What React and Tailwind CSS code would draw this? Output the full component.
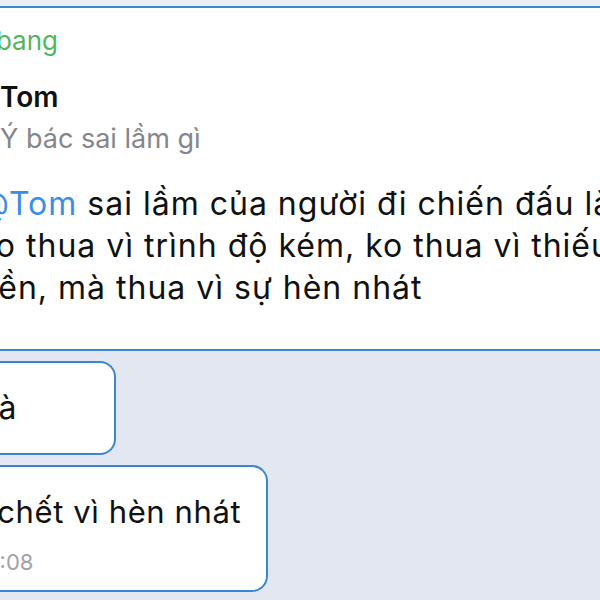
export default function App() {
  return (
    <div className="w-[600px] h-[600px] overflow-hidden bg-[#e2e7f1] font-['Inter','Noto_Sans',sans-serif] text-[#111111]">
      <div className="h-[6px] bg-[#ebeef5]" />

      {/* quoted message bubble */}
      <div className="-mx-[40px] h-[345px] border-y-2 border-[#3a86d2] bg-white pl-[18px] pt-[17px]">
        <div className="text-[26px] leading-[32px] text-[#55b55a] whitespace-nowrap">Abang</div>

        <div className="mt-[22px] border-l-2 border-[#3a86d2] pl-[20px]">
          <div className="text-[28px] leading-[36px] font-semibold whitespace-nowrap">Tom</div>
          <div className="mt-[6px] text-[27px] leading-[36px] text-[#84868c] whitespace-nowrap">Ý bác sai lầm gì</div>
        </div>

        <div className="mt-[26px] text-[32px] leading-[42px] tracking-[1px] whitespace-nowrap">
          <div>
            <span className="text-[#3a8ee4]">@Tom</span> sai lầm của người đi chiến đấu là
          </div>
          <div>ko thua vì trình độ kém, ko thua vì thiếu</div>
          <div>tiền, mà thua vì sự hèn nhát</div>
        </div>
      </div>

      <div className="mt-[10px] -ml-[40px] w-[156px] h-[94px] rounded-[16px] border-2 border-[#3a86d2] bg-white pl-[18px] flex items-center">
        <span className="text-[32px] leading-[42px] tracking-[0.5px] whitespace-nowrap">Là</span>
      </div>

      <div className="mt-[10px] -ml-[40px] w-[308px] h-[127px] rounded-[16px] border-2 border-[#3a86d2] bg-white pl-[4px] pt-[24px]">
        <div className="text-[31px] leading-[42px] tracking-[0.6px] whitespace-nowrap">À chết vì hèn nhát</div>
        <div className="mt-[15px] ml-[11px] text-[22px] leading-[28px] text-[#a2a2a6]">13:08</div>
      </div>
    </div>
  )
}
